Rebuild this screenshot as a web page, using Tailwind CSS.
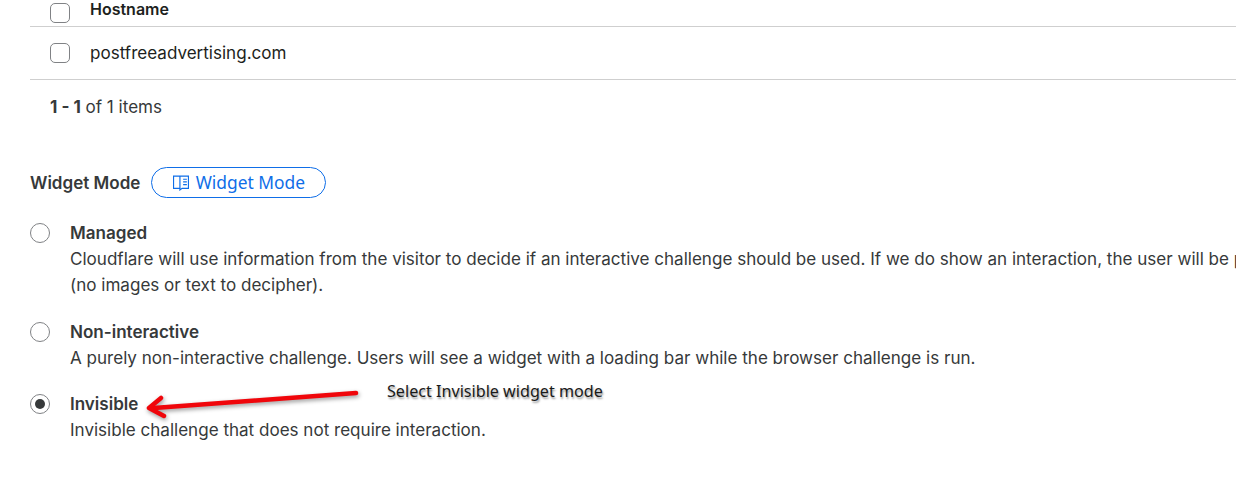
<!DOCTYPE html>
<html lang="en">
<head>
  <meta charset="UTF-8">
  <title>Widget Mode</title>
  <script src="https://cdn.jsdelivr.net/npm/@tailwindcss/browser@4"></script>
</head>
<body class="bg-white">
<div class="relative w-[1236px] h-[488px] overflow-hidden pl-[30px] font-['Inter',sans-serif] text-[17.06px] text-[#36393a]">

  <!-- Hostname table -->
  <div class="flex items-center h-[27px] pl-[20px] border-b border-[#cfcfcf]">
    <span class="block shrink-0 w-[20px] h-[20px] mt-[-1px] rounded-[5px] border border-[#808285] bg-white"></span>
    <span class="ml-[20px] -mt-[9px] text-[16px] font-semibold text-[#1d1f20]">Hostname</span>
  </div>
  <div class="flex items-center h-[53px] pl-[20px] border-b border-[#cfcfcf]">
    <span class="block shrink-0 w-[20px] h-[20px] rounded-[5px] border border-[#808285] bg-white"></span>
    <span class="ml-[20px] text-[#1d1f20]">postfreeadvertising.com</span>
  </div>
  <p class="mt-[17px] ml-[20px] leading-[20px]"><b class="font-bold">1 - 1</b> of 1 items</p>

  <!-- Widget mode -->
  <div class="flex items-center mt-[50px] h-[31px]">
    <span class="font-semibold mt-[1px]">Widget Mode</span>
    <a href="#" class="ml-[11px] flex items-center justify-center w-[175px] h-[31px] rounded-full border border-[#0f6ee8] text-[#0f6ee8] text-[17.4px] font-['Noto_Sans',sans-serif]">
      <svg class="w-[16px] h-[16px] mr-[7px] mt-[1px]" viewBox="1.5 2.5 15 14" fill="none" stroke="#0f6ee8" stroke-width="1.1">
        <path d="M2 3h6v11.5H2zM8 3v13l2-1.5h6V3H8z"/>
        <path d="M11 6h3.5M11 8.5h3.5M11 11h3.5"/>
      </svg>
      Widget Mode
    </a>
  </div>

  <div class="mt-[22px] flex flex-col">
    <div class="flex h-[99px] whitespace-nowrap">
      <span class="block shrink-0 w-[20px] h-[20px] mt-[3px] rounded-full border border-[#808285]"></span>
      <div class="ml-[20px] leading-[26px]">
        <p class="font-semibold">Managed</p>
        <p>Cloudflare will use information from the visitor to decide if an interactive challenge should be used. If we do show an interaction, the user will be presented with a simple challenge<br>(no images or text to decipher).</p>
      </div>
    </div>
    <div class="flex h-[72px] whitespace-nowrap">
      <span class="block shrink-0 w-[20px] h-[20px] mt-[3px] rounded-full border border-[#808285]"></span>
      <div class="ml-[20px] leading-[26px]">
        <p class="font-semibold">Non-interactive</p>
        <p>A purely non-interactive challenge. Users will see a widget with a loading bar while the browser challenge is run.</p>
      </div>
    </div>
    <div class="flex whitespace-nowrap">
      <span class="flex shrink-0 items-center justify-center w-[20px] h-[20px] mt-[3px] rounded-full border border-[#808285]">
        <span class="block w-[10px] h-[10px] rounded-full bg-[#36393a]"></span>
      </span>
      <div class="ml-[20px] leading-[26px]">
        <p class="font-semibold">Invisible</p>
        <p>Invisible challenge that does not require interaction.</p>
      </div>
    </div>
  </div>

  <!-- Annotation over the screenshot -->
  <svg class="absolute left-[140px] top-[385px]" width="225" height="40" viewBox="0 0 225 40" fill="none" style="filter: drop-shadow(1px 2px 2px rgba(0,0,0,.4))">
    <path d="M216 8L14 23" stroke="#f0060b" stroke-width="4.5" stroke-linecap="round"/>
    <path d="M21 13L9 23L24 31" stroke="#f0060b" stroke-width="4.5" stroke-linecap="round" stroke-linejoin="round"/>
  </svg>
  <span class="absolute left-[387px] top-[381px] font-['Noto_Sans',sans-serif] text-[16.15px] leading-[20px] text-[#1a1a1a] [text-shadow:1px_2px_2px_rgba(0,0,0,.4)]">Select Invisible widget mode</span>
</div>
</body>
</html>
